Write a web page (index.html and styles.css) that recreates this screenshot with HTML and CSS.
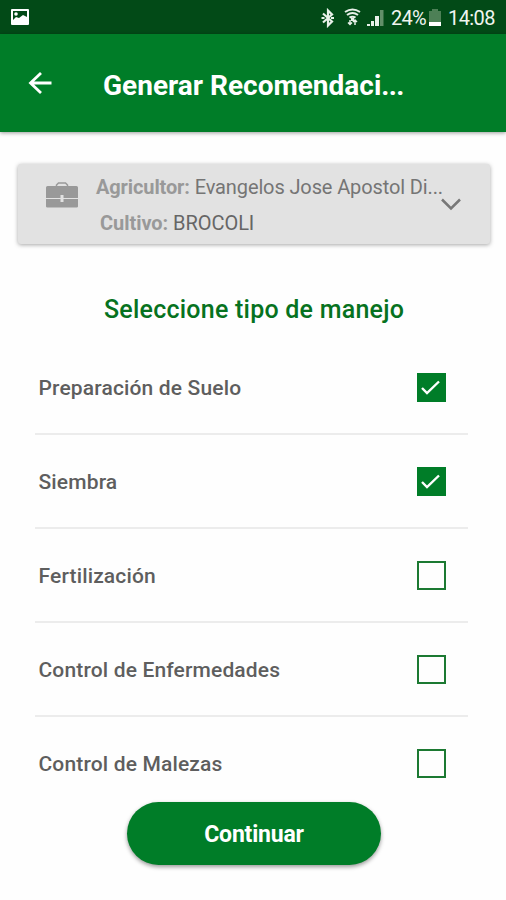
FILE: index.html
```html
<!DOCTYPE html>
<html lang="es">
<head>
<meta charset="utf-8">
<title>Generar Recomendación</title>
<link rel="stylesheet" href="styles.css">
</head>
<body>
<div class="status">
  <svg class="picture" width="18" height="17" viewBox="0 0 18 17"><path fill="#fff" fill-rule="evenodd" d="M1 0h16q1 0 1 1v14q0 1-1 1H1q-1 0-1-1V1q0-1 1-1zM2 2v9l3-3 3 1 4-3 4 2V2z"/><circle cx="5" cy="5" r="1.8" fill="#fff"/></svg>
  <div class="tray">
    <svg class="bt" width="14" height="20" viewBox="0 0 14 20" fill="none" stroke="#e8f0e9" stroke-width="2.200"><path d="M2 5.5l9 8L7 17.500V2.500l4 4-9 8"/><path d="M0.500 10h3M10 10h3"/></svg>
    <svg class="wifi" width="17" height="20" viewBox="0 0 17 20" fill="none" stroke="#e8f0e9" stroke-width="2"><path d="M1 4q7.500-5 15 0M3 7q5.500-4 11 0M5.500 9.700q3-2 6 0"/><path d="M7 10h3v3H7z" fill="#e8f0e9" stroke="none"/><path d="M6 12v5M4 14.500l2 2 2-2M11 17v-5M9 14l2-2 2 2" stroke-width="1.500"/></svg>
    <svg class="signal" width="18" height="18" viewBox="0 0 18 18"><path fill="#e8f0e9" d="M0 15h3v2H0zM4 12h3v5H4zM8 7h4v10H8z"/><path fill="#628f69" d="M13 1h3.500v16H13z"/></svg>
    <span class="pct">24%</span>
    <svg class="battery" width="12" height="18" viewBox="0 0 12 18"><path fill="#4d8056" d="M3 0h6v2h3v11H0V2h3z"/><path fill="#fff" d="M0 13h12v4H0z"/></svg>
    <span class="clock">14:08</span>
  </div>
</div>
<header class="bar">
  <svg class="back" width="24" height="24" viewBox="0 0 24 24" fill="none" stroke="#fff" stroke-width="2.800"><path d="M23.500 12H2M13 2L2.500 12 13 22"/></svg>
  <h1 class="title">Generar Recomendaci<span class="dots">...</span></h1>
</header>
<main class="content">
  <section class="card">
    <svg class="case" width="32" height="27" viewBox="0 0 32 27"><path fill="none" stroke="#999" stroke-width="1.500" d="M10.500 5V3l2-2h7l2 2v2"/><path fill="#999" d="M1.500 4h29q1.500 0 1.500 1.500V16H17.500v-3h-3v3H0V5.500Q0 4 1.500 4zM0 17h14.500v3h3v-3H32v7.500q0 1-1.500 1h-29Q0 25.500 0 24.500z"/></svg>
    <div class="info">
      <p class="farmer"><b>Agricultor:</b> Evangelos Jose Apostol Di...</p>
      <p class="crop"><b>Cultivo:</b> BROCOLI</p>
    </div>
    <svg class="chevron" width="20" height="13" viewBox="0 0 20 13" fill="none" stroke="#777" stroke-width="2.500"><path d="M1 1.500l9 9 9-9"/></svg>
  </section>
  <h2 class="heading">Seleccione tipo de manejo</h2>
  <ul class="list">
    <li class="row"><span>Preparación de Suelo</span><i class="box on"><svg width="28" height="28" viewBox="0 0 28 28"><path d="M5 15l5 5L22 8.500" fill="none" stroke="#fff" stroke-width="2.400"/></svg></i></li>
    <li class="row"><span>Siembra</span><i class="box on"><svg width="28" height="28" viewBox="0 0 28 28"><path d="M5 15l5 5L22 8.500" fill="none" stroke="#fff" stroke-width="2.400"/></svg></i></li>
    <li class="row"><span>Fertilización</span><i class="box"></i></li>
    <li class="row"><span>Control de Enfermedades</span><i class="box"></i></li>
    <li class="row last"><span>Control de Malezas</span><i class="box"></i></li>
  </ul>
  <button class="go"><span>Continuar</span></button>
</main>
</body>
</html>
```
FILE: styles.css
```css
* { box-sizing: border-box; }
body {
  margin: 0;
  height: 900px;
  overflow: hidden;
  background: #fefefe;
  font-family: Roboto, "Liberation Sans", sans-serif;
  color: #5e5e5e;
}
h1, h2, p, ul { margin: 0; padding: 0; }
svg { display: block; flex: none; }
.status {
  height: 34px;
  background: #024a17;
  display: flex;
  justify-content: space-between;
  padding: 0 11px;
  color: #f0f5f0;
}
.picture { margin-top: 9px; }
.tray { display: flex; white-space: nowrap; font-size: 20px; line-height: 37px; }
.bt { margin: 8px 9px 0 0; }
.wifi { margin: 8px 6px 0 0; }
.signal { margin: 9px 6px 0 0; }
.pct { width: 34px; letter-spacing: -0.7px; }
.battery { margin: 9px 7px 0 4px; }
.clock { width: 48px; letter-spacing: -0.6px; }
.tray { margin-right: -1px; }
.bar {
  height: 98px;
  background: #007d28;
  display: flex;
  align-items: center;
  padding-left: 28px;
  box-shadow: 0 1px 4px rgba(0, 0, 0, .4);
  color: #fff;
}
.title {
  margin: 5px 0 0 51px;
  font-size: 28px;
  font-weight: 700;
  white-space: nowrap;
}
.dots { letter-spacing: -0.7px; }
.content { display: flex; flex-direction: column; }
.card {
  margin: 32px 16px 0 18px;
  height: 80px;
  background: #e2e2e2;
  border-radius: 3px;
  box-shadow: 0 1px 4px rgba(0, 0, 0, .35);
  display: flex;
  padding-left: 28px;
  font-size: 20px;
  line-height: 24px;
  letter-spacing: -0.12px;
  color: #757575;
}
.card b { font-weight: 700; color: #999; }
.case { margin-top: 18px; }
.info { width: 346px; margin: 11px 0 0 18px; white-space: nowrap; }
.crop { margin: 12px 0 0 4px; color: #666; letter-spacing: -0.05px; }
.chevron { margin: 34px 0 0 -1px; }
.heading {
  margin-top: 50px;
  height: 32px;
  line-height: 32px;
  padding-left: 104px;
  font-size: 25px;
  font-weight: 500;
  letter-spacing: 0.23px;
  color: #067220;
  white-space: nowrap;
}
.list { list-style: none; margin: 15px 38px 0 35px; }
.row {
  height: 94px;
  border-bottom: 2px solid #ececec;
  display: flex;
  align-items: center;
  justify-content: space-between;
  padding: 0 22px 0 3.500px;
  font-size: 21px;
  font-weight: 500;
  letter-spacing: 0.15px;
  white-space: nowrap;
}
.row span { padding-top: 2px; }
.last { border-color: transparent; }
.box { width: 29px; height: 29px; border: 2px solid #1c7932; flex: none; }
.on { border: 0; background: #007d28; }
.go {
  width: 254px;
  height: 63px;
  margin: -9px 0 0 127px;
  padding: 2px 0 0;
  border: 0;
  border-radius: 32px;
  background: #007d28;
  box-shadow: 0 2px 4px rgba(0, 0, 0, .4);
  color: #fff;
  font: 700 23px Roboto, "Liberation Sans", sans-serif;
  letter-spacing: -0.2px;
  z-index: 1;
}
```
